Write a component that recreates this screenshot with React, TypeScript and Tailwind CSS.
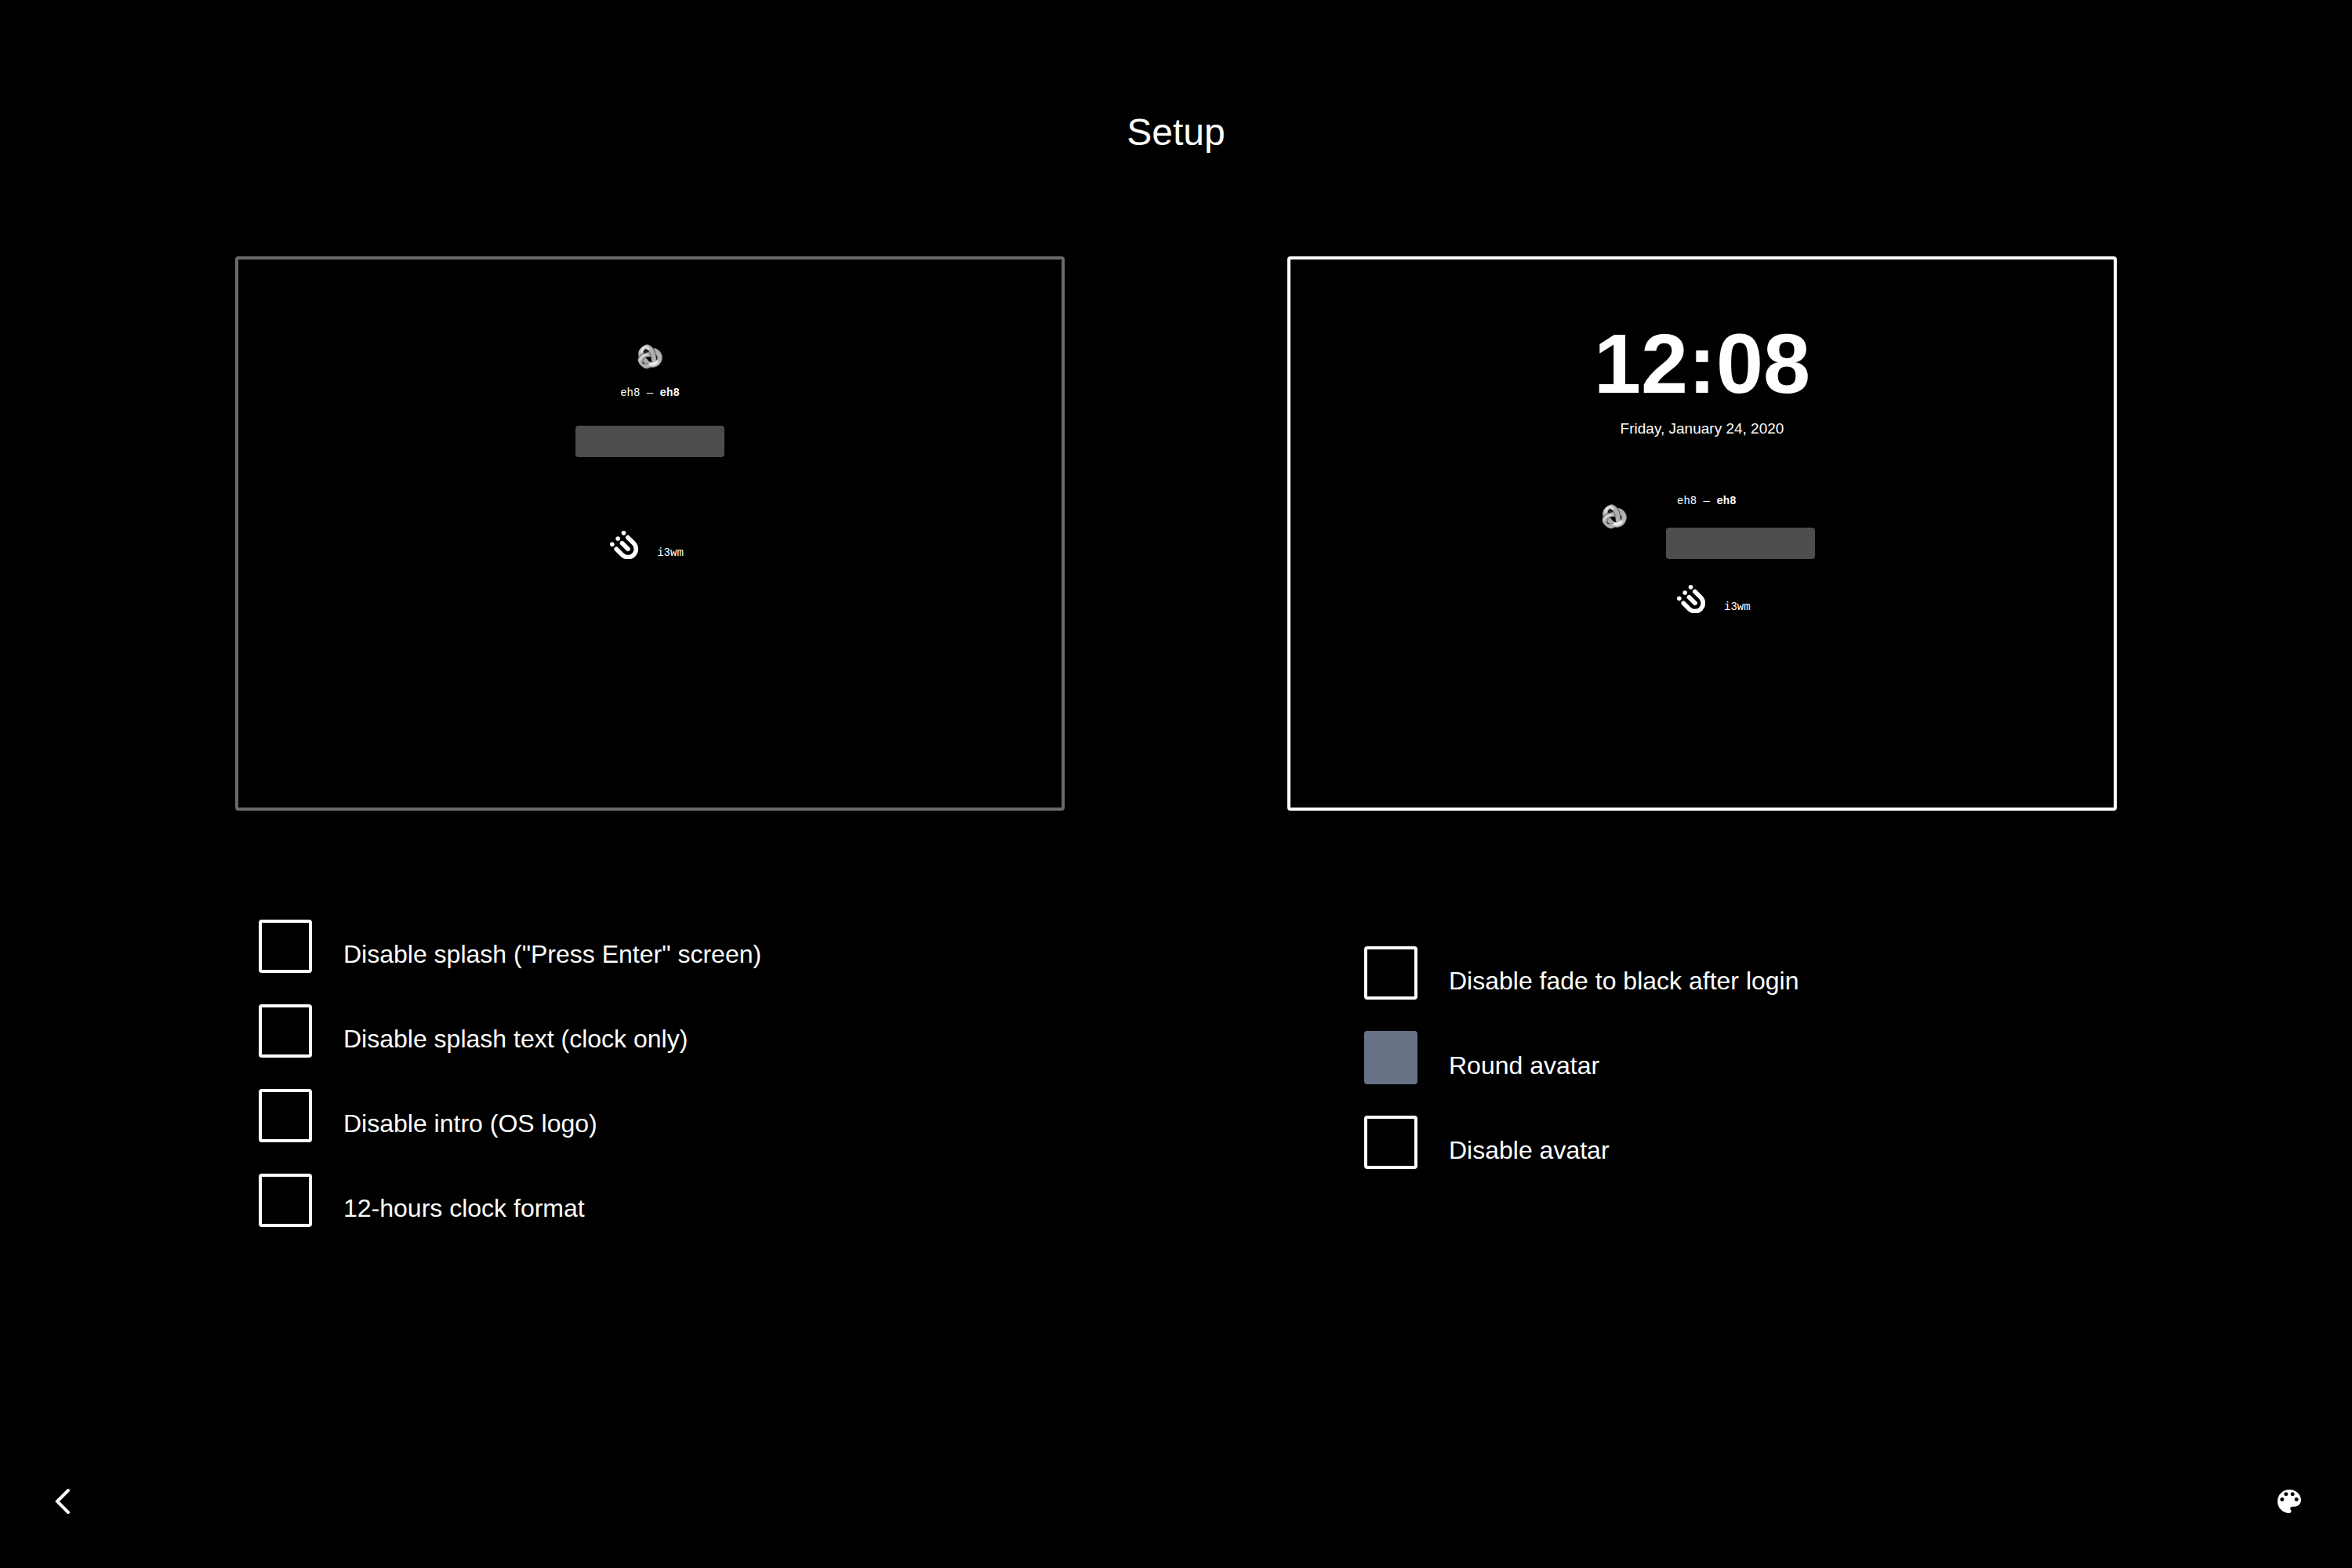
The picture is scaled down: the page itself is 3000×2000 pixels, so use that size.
import { useState } from "react";

const KNOT_STRANDS = [
  "M122 66 C140 72 148 92 139 106 C131 120 112 124 100 117 L84 101",
  "M72 88 C66 66 76 50 91 51 C104 52 114 64 117 80",
  "M104 82 C88 76 67 90 67 109 C67 127 86 130 101 122",
  "M91 51 C108 53 120 76 120 104",
];

function KnotAvatar() {
  return (
    <svg viewBox="57 41 96 96" className="size-8 rounded-full" aria-hidden="true">
      <defs>
        <linearGradient id="tube" x1="57" y1="41" x2="152" y2="136" gradientUnits="userSpaceOnUse">
          <stop offset="0" stopColor="#d4d4d4" />
          <stop offset="0.5" stopColor="#acacac" />
          <stop offset="1" stopColor="#c0c0c0" />
        </linearGradient>
      </defs>
      <g fill="none">
        {KNOT_STRANDS.map((d) => (
          <g key={d}>
            <path d={d} stroke="#444444" strokeWidth="21" />
            <path d={d} stroke="#8c8c8c" strokeWidth="19" strokeLinecap="round" />
            <path d={d} stroke="url(#tube)" strokeWidth="14" strokeLinecap="round" />
          </g>
        ))}
        <path d="M74 72 C76 54 88 48 100 58" stroke="#ececec" strokeWidth="6" strokeLinecap="round" />
        <path d="M66 102 C70 90 80 84 94 82" stroke="#dedede" strokeWidth="5" strokeLinecap="round" />
        <path d="M108 118 C116 120 126 116 132 110" stroke="#d0d0d0" strokeWidth="15" strokeLinecap="round" />
        <path d="M107 117 C115 119 124 116 130 110" stroke="#f0f0f0" strokeWidth="8" strokeLinecap="round" />
      </g>
      <path d="M90 92 L107 88 L110 103 L101 106 Z" fill="#000" />
      <path d="M82 70 Q88 60 98 71 L84 78 Z" fill="#2a2a2a" />
    </svg>
  );
}

function SessionLogo() {
  return (
    <svg viewBox="26 36 108 108" className="size-9" aria-hidden="true">
      <g fill="none" stroke="#fff" strokeWidth="17" strokeLinecap="round">
        <path d="M94.5 61.5 L117 84 A31 31 0 0 1 73 128 L50.5 105.5" />
        <path d="M72.5 83.5 L95 106" />
      </g>
      <g fill="#fff">
        <circle cx="34.5" cy="88" r="8.5" />
        <circle cx="56.5" cy="66" r="8.5" />
        <circle cx="78.5" cy="44.5" r="8.5" />
      </g>
    </svg>
  );
}

function UserName() {
  return (
    <span className="font-['Liberation_Mono',monospace] text-sm leading-5">
      eh8 — <b>eh8</b>
    </span>
  );
}

function PasswordField() {
  return <span className="block h-10 w-[190px] rounded bg-[#4d4d4d]" />;
}

function Session() {
  return (
    <span className="flex items-end gap-6">
      <SessionLogo />
      <span className="font-['Liberation_Mono',monospace] text-sm leading-4">i3wm</span>
    </span>
  );
}

const CARD = "flex aspect-[1058/707] flex-col items-center rounded-[4px] border-4 bg-black";

type Option = { id: string; label: string; checked?: boolean };

const SPLASH_OPTIONS: Option[] = [
  { id: "splash", label: 'Disable splash ("Press Enter" screen)' },
  { id: "splash-text", label: "Disable splash text (clock only)" },
  { id: "intro", label: "Disable intro (OS logo)" },
  { id: "clock", label: "12-hours clock format" },
];

const LOGIN_OPTIONS: Option[] = [
  { id: "fade", label: "Disable fade to black after login" },
  { id: "round-avatar", label: "Round avatar", checked: true },
  { id: "avatar", label: "Disable avatar" },
];

function OptionRow({ id, label, checked }: Option) {
  return (
    <div className="flex items-start gap-10">
      <input
        id={id}
        type="checkbox"
        defaultChecked={checked}
        className="size-[68px] shrink-0 appearance-none rounded-[4px] border-4 border-white checked:border-[#677286] checked:bg-[#677286]"
      />
      <label htmlFor={id} className="pt-6 text-[32px] leading-10">
        {label}
      </label>
    </div>
  );
}

export default function App() {
  const [layout, setLayout] = useState("clock");

  return (
    <div className="flex min-h-screen flex-col bg-black font-['Liberation_Sans',Arial,sans-serif] text-white">
      <h1 className="pt-[141px] text-center text-5xl leading-[56px]">Setup</h1>

      <main className="mt-[130px] px-[10%]">
        <div className="grid grid-cols-2 gap-x-[284px]">
          <button
            type="button"
            aria-label="Compact layout"
            aria-pressed={layout === "compact"}
            onClick={() => setLayout("compact")}
            className={`${CARD} pt-[108px] ${layout === "compact" ? "border-white" : "border-[#696969]"}`}
          >
            <KnotAvatar />
            <span className="mt-5 flex">
              <UserName />
            </span>
            <span className="mt-8">
              <PasswordField />
            </span>
            <span className="mt-[94px] mr-2">
              <Session />
            </span>
          </button>

          <button
            type="button"
            aria-label="Clock layout"
            aria-pressed={layout === "clock"}
            onClick={() => setLayout("clock")}
            className={`${CARD} pt-[78px] ${layout === "clock" ? "border-white" : "border-[#696969]"}`}
          >
            <span className="text-[108px] leading-[110px] font-bold">12:08</span>
            <span className="mt-4 text-[19px] leading-6">Friday, January 24, 2020</span>
            <span className="mt-[70px] ml-4 flex items-start gap-[50px]">
              <span className="pt-[14px]">
                <KnotAvatar />
              </span>
              <span className="flex flex-col items-start">
                <span className="ml-[14px] flex">
                  <UserName />
                </span>
                <span className="mt-6">
                  <PasswordField />
                </span>
                <span className="mt-[33px] ml-[14px]">
                  <Session />
                </span>
              </span>
            </span>
          </button>
        </div>

        <div className="mt-[139px] grid grid-cols-2 gap-x-[284px]">
          <fieldset className="flex flex-col gap-10 pl-[30px]">
            {SPLASH_OPTIONS.map((option) => (
              <OptionRow key={option.id} {...option} />
            ))}
          </fieldset>
          <fieldset className="flex flex-col gap-10 pt-[34px] pl-[98px]">
            {LOGIN_OPTIONS.map((option) => (
              <OptionRow key={option.id} {...option} />
            ))}
          </fieldset>
        </div>
      </main>

      <footer className="mt-auto flex items-center justify-between px-[60px] pb-[65px]">
        <button type="button" aria-label="Back">
          <svg viewBox="0 0 40 40" className="size-10" fill="none" stroke="#fff" strokeWidth="4" strokeLinecap="round">
            <path d="M27 6 L13 20 L27 34" />
          </svg>
        </button>
        <button type="button" aria-label="Theme">
          <svg viewBox="0 0 24 24" className="size-10" fill="#fff">
            <path d="M12 3c-4.97 0-9 4.03-9 9s4.03 9 9 9c.83 0 1.5-.67 1.5-1.5 0-.39-.15-.74-.39-1.01-.23-.26-.38-.61-.38-.99 0-.83.67-1.5 1.5-1.5H16c2.76 0 5-2.24 5-5 0-4.42-4.03-8-9-8zm-5.5 9c-.83 0-1.5-.67-1.5-1.5S5.67 9 6.5 9 8 9.67 8 10.5 7.33 12 6.5 12zm3-4C8.67 8 8 7.33 8 6.5S8.67 5 9.5 5s1.5.67 1.5 1.5S10.33 8 9.5 8zm5 0c-.83 0-1.5-.67-1.5-1.5S13.67 5 14.5 5s1.5.67 1.5 1.5S15.33 8 14.5 8zm3 4c-.83 0-1.5-.67-1.5-1.5S16.67 9 17.5 9s1.5.67 1.5 1.5-.67 1.5-1.5 1.5z" />
          </svg>
        </button>
      </footer>
    </div>
  );
}
